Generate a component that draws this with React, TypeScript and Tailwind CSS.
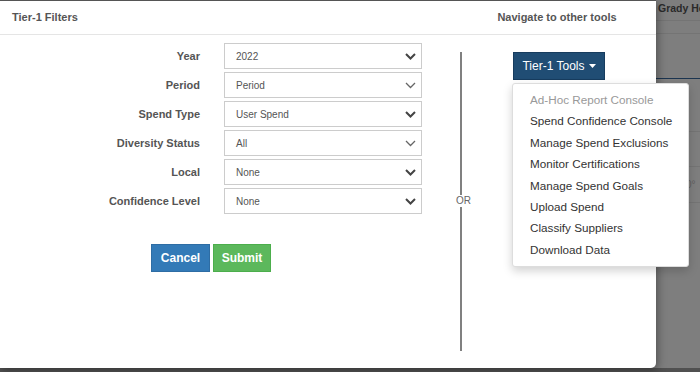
import React from 'react';

const FILTERS = [
  { label: 'Year', value: '2022', thin: false },
  { label: 'Period', value: 'Period', thin: true },
  { label: 'Spend Type', value: 'User Spend', thin: false },
  { label: 'Diversity Status', value: 'All', thin: true },
  { label: 'Local', value: 'None', thin: false },
  { label: 'Confidence Level', value: 'None', thin: false },
];

const TOOLS = [
  'Spend Confidence Console',
  'Manage Spend Exclusions',
  'Monitor Certifications',
  'Manage Spend Goals',
  'Upload Spend',
  'Classify Suppliers',
  'Download Data',
];

const Chevron: React.FC<{ thin?: boolean }> = ({ thin }) => (
  <svg width="11" height="7" viewBox="0 0 11 7" className="shrink-0">
    <polyline
      points="1,1 5.5,5.5 10,1"
      fill="none"
      stroke={thin ? '#666' : '#444'}
      strokeWidth={thin ? 1.3 : 2}
    />
  </svg>
);

export default function App() {
  return (
    <div
      className="relative w-[700px] h-[372px] overflow-hidden bg-[#7e7e7e]"
      style={{ fontFamily: '"Liberation Sans", Arial, sans-serif' }}
    >
      {/* page behind the overlay */}
      <div className="absolute left-[656px] top-0 right-0 bottom-0">
        <div className="pl-[2px] pt-[1px] text-[10.5px] font-bold text-[#2a2a2a] whitespace-nowrap overflow-hidden">Grady He</div>
        <div className="border-b border-[#747474] mt-[3px]" />
        <div className="border-b border-[#747474] mt-[12px]" />
        <div className="border-b border-[#1c3550] mt-[44px]" />
        <div className="border-b border-[#747474] mt-[52px]" />
        <div className="border-b border-[#747474] mt-[34px]" />
        <div className="mt-[10px] pl-[30px] text-[10px] text-[#5f5f5f]">0°</div>
        <div className="border-b border-[#747474] mt-[10px]" />
      </div>
      <div className="absolute left-0 right-0 bottom-0 h-[4px] bg-[#505050]" />

      {/* modal */}
      <div className="relative w-[656px] h-[368px] bg-white border-t border-[#555] rounded-br-[5px] shadow-[2px_2px_8px_rgba(0,0,0,0.35)]">
        <div className="flex h-[34px] items-center border-b border-[#e5e5e5] text-[11px] font-bold text-[#555]">
          <div className="w-[462px] pl-[12px]">Tier-1 Filters</div>
          <div className="flex-1 text-center pr-[4px]">Navigate to other tools</div>
        </div>

        <div className="flex">
          {/* filters */}
          <div className="w-[460px] pt-[8px]">
            <div className="flex flex-col gap-[3px]">
              {FILTERS.map((f) => (
                <div key={f.label} className="flex items-center">
                  <div className="w-[200px] text-right text-[11px] font-bold text-[#555]">{f.label}</div>
                  <div className="ml-[24px] flex h-[26px] w-[198px] items-center justify-between border border-[#ccc] pl-[11px] pr-[5px] text-[10px] text-[#555]">
                    <span>{f.value}</span>
                    <Chevron thin={f.thin} />
                  </div>
                </div>
              ))}
            </div>
            <div className="mt-[30px] flex gap-[3px] pl-[151px]">
              <button className="h-[28px] w-[59px] border border-[#2e6da4] bg-[#337ab7] text-[12px] font-bold text-white">
                Cancel
              </button>
              <button className="h-[28px] w-[58px] border border-[#4cae4c] bg-[#5cb85c] text-[12px] font-bold text-white">
                Submit
              </button>
            </div>
          </div>

          {/* divider */}
          <div className="relative mt-[17px] h-[299px] w-[2px] bg-[#808080]">
            <div className="absolute left-[-5px] top-[143px] bg-white px-[1px] text-[10px] leading-[12px] text-[#666]">OR</div>
          </div>

          {/* tools */}
          <div className="flex flex-1 flex-col items-center pt-[17px]">
            <button className="flex h-[28px] w-[92px] items-center justify-center gap-[4px] border border-[#173c5e] bg-[#204d74] text-[12px] text-white">
              Tier-1 Tools
              <svg width="7" height="4" viewBox="0 0 7 4">
                <polygon points="0,0 7,0 3.5,4" fill="white" />
              </svg>
            </button>
          </div>
        </div>

        {/* open dropdown */}
        <div className="absolute left-[512px] top-[82px] w-[177px] rounded-[3px] border border-[#ddd] bg-white pt-[5px] pb-[6px] shadow-[0_4px_10px_rgba(0,0,0,0.18)]">
          <div className="h-[21.4px] pl-[17px] text-[11.7px] leading-[21.4px] text-[#999]">Ad-Hoc Report Console</div>
          {TOOLS.map((t) => (
            <div key={t} className="h-[21.4px] pl-[17px] text-[11.7px] leading-[21.4px] text-[#333]">{t}</div>
          ))}
        </div>
      </div>
    </div>
  );
}
